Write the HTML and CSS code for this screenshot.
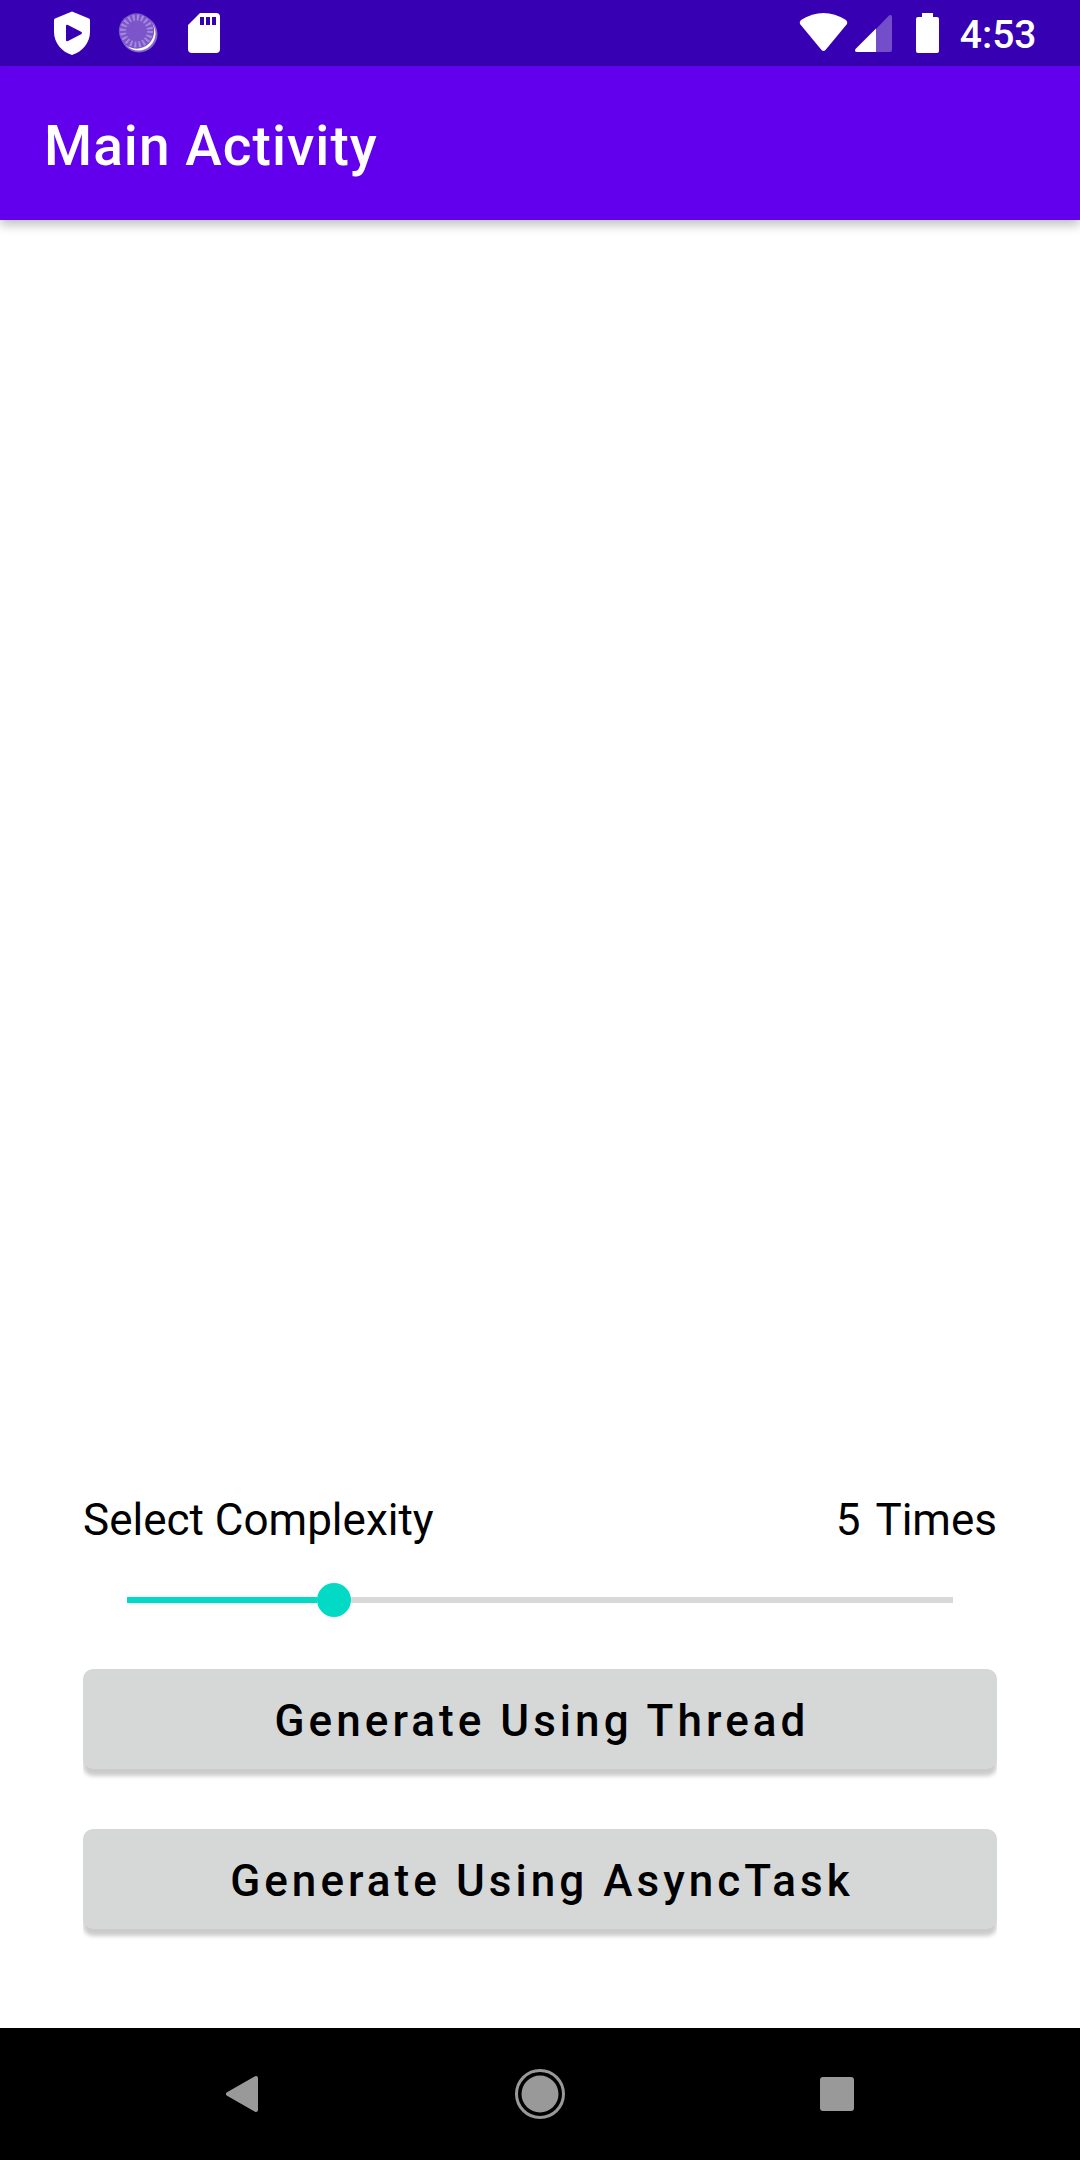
FILE: index.html
```html
<!DOCTYPE html>
<html lang="en">
<head>
<meta charset="utf-8">
<title>Main Activity</title>
<link rel="stylesheet" href="styles.css">
</head>
<body>
<div class="screen">
  <header class="status">
    <svg width="220" height="66" viewBox="30 0 220 66">
      <path fill="#fff" fill-rule="evenodd" d="M72 11.500L89 18.500Q90 19 90 20V32C90 43 82 52 72 55C62 52 54 43 54 32V20Q54 19 55 18.500ZM66 26V40Q66 42 68 41L81.500 34Q82.500 33 81.500 32L68 25Q66 24 66 26Z"/>
      <circle cx="139" cy="34" r="18.500" fill="#fff" opacity=".4"/>
      <circle cx="138.500" cy="33.500" r="17" fill="#fff"/>
      <circle cx="136.500" cy="31" r="17.700" fill="#7c55cb"/>
      <circle cx="136.500" cy="31" r="13.500" fill="none" stroke="#a58ada" stroke-width="6" stroke-dasharray="2 2.241"/>
      <path fill="#fff" fill-rule="evenodd" d="M200 13H216Q220 13 220 17V49Q220 53 216 53H192Q188 53 188 49V25ZM200 17V25H204V17ZM206 17V25H210V17ZM212 17V25H216V17Z"/>
    </svg>
    <div class="status-right">
      <svg width="160" height="66" viewBox="790 0 160 66">
        <path fill="#fff" d="M801 20Q823.500 6 846 20Q848 22 847 24L825.500 50Q823.500 52 821.500 50L800 24Q799 22 801 20Z"/>
        <path fill="#fff" fill-opacity=".3" d="M876 29L889 15.500Q892 14 892 17V50Q892 52 890 52H876Z"/>
        <path fill="#fff" d="M876 28.500V52H857Q854 52 855.500 49Z"/>
        <path fill="#fff" d="M922 13H933V17H937Q939 17 939 19V51Q939 53 937 53H918Q916 53 916 51V19Q916 17 918 17H922Z"/>
      </svg>
      <span class="clock">4:53</span>
    </div>
  </header>
  <div class="appbar">Main Activity</div>
  <main class="content">
    <div class="labels"><span>Select Complexity</span><span class="count">5 Times</span></div>
    <div class="slider"><span class="fill"></span><span class="thumb"></span><span class="rest"></span></div>
    <button class="btn">Generate Using Thread</button>
    <button class="btn">Generate Using AsyncTask</button>
  </main>
  <nav class="nav">
    <svg width="1080" height="132" viewBox="0 2028 1080 132">
      <path fill="#999" stroke="#999" stroke-width="4" stroke-linejoin="round" d="M228 2094L256 2078V2110Z"/>
      <circle cx="540" cy="2094" r="18.500" fill="#999"/>
      <circle cx="540" cy="2094" r="23.500" fill="none" stroke="#999" stroke-width="3"/>
      <rect x="820" y="2077" width="34" height="34" rx="3" fill="#999"/>
    </svg>
  </nav>
</div>
</body>
</html>
```
FILE: styles.css
```css
body { margin: 0; font-family: Roboto, sans-serif; }
.screen { width: 1080px; height: 2160px; display: flex; flex-direction: column; background: #fff; }
.status { height: 66px; background: #3700b3; display: flex; justify-content: space-between; padding: 0 43.5px 0 30px; box-sizing: border-box; color: #fff; }
.status-right { display: flex; }
.status svg { display: block; }
.clock { font-size: 39px; font-weight: 500; line-height: 70px; margin-left: 9.5px; }
.appbar { height: 154px; line-height: 160px; padding-left: 44px; background: #6200ee; color: #fff; font-size: 55px; font-weight: 500; letter-spacing: 1.05px; box-shadow: 0 5px 10px rgba(0,0,0,.25); }
.content { flex: 1; display: flex; flex-direction: column; justify-content: flex-end; padding: 0 83px 99px; }
.labels { display: flex; justify-content: space-between; font-size: 44px; line-height: 52px; color: #000; }
.count { word-spacing: 5px; }
.slider { display: flex; align-items: center; height: 34px; margin: 37px 44px 52px; }
.fill { width: 190px; height: 6px; background: #03dac5; }
.thumb { width: 34px; height: 34px; border-radius: 50%; background: #03dac5; }
.rest { flex: 1; height: 6px; background: #d9d9d9; }
.btn { height: 100px; box-sizing: border-box; border: 0; border-radius: 10px; padding: 4px 0 0 4px; background: #d6d7d7; color: #000; font: 500 44px/96px Roboto, sans-serif; letter-spacing: 4.05px; box-shadow: 0 7px 4px #cbcbcb; clip-path: inset(-2px 0 -14px); }
.btn + .btn { margin-top: 60px; }
.nav { height: 132px; background: #000; }
.nav svg { display: block; }
```
